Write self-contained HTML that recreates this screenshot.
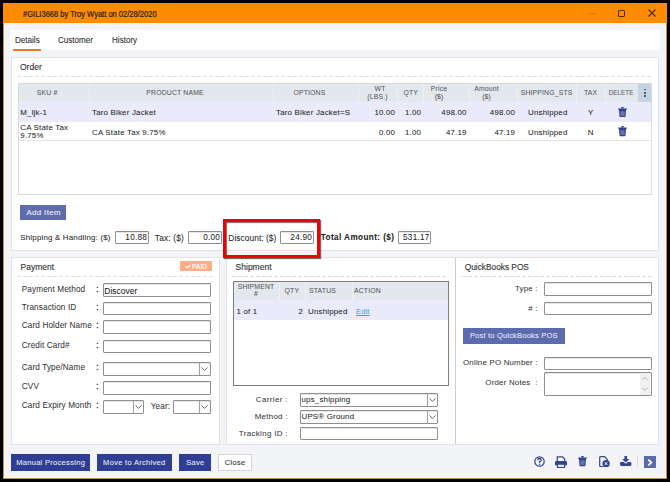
<!DOCTYPE html>
<html><head><meta charset="utf-8">
<style>
*{box-sizing:border-box;margin:0;padding:0}
html,body{width:670px;height:482px;overflow:hidden;background:#000}
body{position:relative;font-family:"Liberation Sans",sans-serif;color:#222}
.a{position:absolute}
.t{position:absolute;white-space:nowrap;line-height:12px}
</style></head><body>
<div class="a" style="left:3px;top:3px;width:664px;height:476px;background:#b89058"></div>
<div class="a" style="left:4px;top:3px;width:662px;height:475px;background:#fff6dc"></div>
<div class="a" style="left:5px;top:3px;width:660px;height:474px;background:#f3f4f7"></div>
<div class="a" style="left:3px;top:3px;width:664px;height:20px;background:#ff8c00"></div>
<div class="t" style="top:7.70px;font-size:8.4px;color:#2a1a0a;-webkit-text-stroke:0.12px #2a1a0a;left:23.00px;transform-origin:0 50%;transform:scaleX(0.9);-webkit-text-stroke:0.2px #2a1a0a;">#GILI3668 by Troy Wyatt on 02/28/2020</div>
<div class="a" style="left:14px;top:11px;width:1px;height:1px;background:#c8741a;opacity:.6"></div>
<div class="a" style="left:17px;top:11px;width:1px;height:1px;background:#c8741a;opacity:.6"></div>
<div class="a" style="left:15px;top:13px;width:1px;height:1px;background:#c8741a;opacity:.6"></div>
<div class="a" style="left:13px;top:14px;width:1px;height:1px;background:#c8741a;opacity:.6"></div>
<div class="a" style="left:589px;top:13px;width:7px;height:1px;background:#d07a20"></div>
<div class="a" style="left:618px;top:9.6px;width:7px;height:7.000000000000002px;border:1.2px solid #4a2a10;border-radius:1px"></div>
<svg class="a" style="left:647.5px;top:9px" width="8" height="8" viewBox="0 0 8 8"><path d="M0.5 0.5 L7.5 7.5 M7.5 0.5 L0.5 7.5" stroke="#4a2a10" stroke-width="1.1"/></svg>
<div class="a" style="left:10px;top:30px;width:650px;height:20px;background:#fff"></div>
<div class="t" style="top:34.00px;font-size:8.6px;color:#333;-webkit-text-stroke:0.12px #333;left:14.50px;transform-origin:0 50%;transform:scaleX(0.94);">Details</div>
<div class="t" style="top:34.00px;font-size:8.6px;color:#333;-webkit-text-stroke:0.12px #333;left:58.00px;transform-origin:0 50%;transform:scaleX(0.94);">Customer</div>
<div class="t" style="top:34.00px;font-size:8.6px;color:#333;-webkit-text-stroke:0.12px #333;left:112.00px;transform-origin:0 50%;transform:scaleX(0.94);">History</div>
<div class="a" style="left:13px;top:49px;width:28px;height:2px;background:#ee7a22"></div>
<div class="a" style="left:11px;top:57px;width:648px;height:194px;background:#fff;border:1px solid #e1e3e8"></div>
<div class="t" style="top:61.30px;font-size:8.5px;color:#333;-webkit-text-stroke:0.12px #333;left:20.00px;">Order</div>
<div class="a" style="left:17px;top:76px;width:636px;height:1px;background-image:linear-gradient(to right,#dcdee2 0,#dcdee2 4px,transparent 4px);background-size:6px 1px"></div>
<div class="a" style="left:18px;top:83px;width:634px;height:112px;background:#fff;border:1px solid #d6dae1"></div>
<div class="a" style="left:19px;top:84px;width:632px;height:18px;background:#e3e8ef"></div>
<div class="a" style="left:638px;top:84px;width:13px;height:18px;background:#c5d3e2"></div>
<div class="a" style="left:644.2px;top:88.7px;width:1.599999999999909px;height:1.5999999999999943px;background:#555d68"></div>
<div class="a" style="left:644.2px;top:92.0px;width:1.599999999999909px;height:1.5999999999999943px;background:#555d68"></div>
<div class="a" style="left:644.2px;top:95.3px;width:1.599999999999909px;height:1.5999999999999943px;background:#555d68"></div>
<div class="a" style="left:89px;top:84px;width:1px;height:18px;background:#eef0f4"></div>
<div class="a" style="left:273px;top:84px;width:1px;height:18px;background:#eef0f4"></div>
<div class="a" style="left:358px;top:84px;width:1px;height:18px;background:#eef0f4"></div>
<div class="a" style="left:397px;top:84px;width:1px;height:18px;background:#eef0f4"></div>
<div class="a" style="left:423px;top:84px;width:1px;height:18px;background:#eef0f4"></div>
<div class="a" style="left:469px;top:84px;width:1px;height:18px;background:#eef0f4"></div>
<div class="a" style="left:517px;top:84px;width:1px;height:18px;background:#eef0f4"></div>
<div class="a" style="left:576px;top:84px;width:1px;height:18px;background:#eef0f4"></div>
<div class="a" style="left:605px;top:84px;width:1px;height:18px;background:#eef0f4"></div>
<div class="a" style="left:19px;top:102px;width:632px;height:19px;background:#e9ebfa"></div>
<div class="a" style="left:19px;top:140px;width:632px;height:1px;background:#e2e4e8"></div>
<div class="a" style="left:19px;top:121px;width:632px;height:1px;background:#eceef2"></div>
<div class="t" style="top:87.40px;font-size:6.85px;color:#555;letter-spacing:0.17px;-webkit-text-stroke:0.04px #555;left:-53.00px;width:200px;text-align:center;text-indent:0.17px;">SKU #</div>
<div class="t" style="top:87.40px;font-size:6.85px;color:#555;letter-spacing:0.17px;-webkit-text-stroke:0.04px #555;left:75.00px;width:200px;text-align:center;text-indent:0.17px;">PRODUCT NAME</div>
<div class="t" style="top:87.40px;font-size:6.85px;color:#555;letter-spacing:0.17px;-webkit-text-stroke:0.04px #555;left:209.40px;width:200px;text-align:center;text-indent:0.17px;">OPTIONS</div>
<div class="t" style="top:83.40px;font-size:6.85px;color:#555;letter-spacing:0.17px;-webkit-text-stroke:0.04px #555;left:280.00px;width:200px;text-align:center;text-indent:0.17px;">WT</div>
<div class="t" style="top:91.40px;font-size:6.85px;color:#555;letter-spacing:0.17px;-webkit-text-stroke:0.04px #555;left:277.50px;width:200px;text-align:center;text-indent:0.17px;">(LBS.)</div>
<div class="t" style="top:87.40px;font-size:6.85px;color:#555;letter-spacing:0.17px;-webkit-text-stroke:0.04px #555;left:310.70px;width:200px;text-align:center;text-indent:0.17px;">QTY</div>
<div class="t" style="top:83.40px;font-size:6.85px;color:#555;letter-spacing:0.17px;-webkit-text-stroke:0.04px #555;left:339.00px;width:200px;text-align:center;text-indent:0.17px;">Price</div>
<div class="t" style="top:91.40px;font-size:6.85px;color:#555;letter-spacing:0.17px;-webkit-text-stroke:0.04px #555;left:339.00px;width:200px;text-align:center;text-indent:0.17px;">($)</div>
<div class="t" style="top:83.40px;font-size:6.85px;color:#555;letter-spacing:0.17px;-webkit-text-stroke:0.04px #555;left:386.50px;width:200px;text-align:center;text-indent:0.17px;">Amount</div>
<div class="t" style="top:91.40px;font-size:6.85px;color:#555;letter-spacing:0.17px;-webkit-text-stroke:0.04px #555;left:386.50px;width:200px;text-align:center;text-indent:0.17px;">($)</div>
<div class="t" style="top:87.40px;font-size:6.85px;color:#555;letter-spacing:0.17px;-webkit-text-stroke:0.04px #555;left:446.50px;width:200px;text-align:center;text-indent:0.17px;">SHIPPING_STS</div>
<div class="t" style="top:87.40px;font-size:6.85px;color:#555;letter-spacing:0.17px;-webkit-text-stroke:0.04px #555;left:490.50px;width:200px;text-align:center;text-indent:0.17px;">TAX</div>
<div class="t" style="top:87.40px;font-size:6.85px;color:#555;letter-spacing:0.17px;-webkit-text-stroke:0.04px #555;left:521.40px;width:200px;text-align:center;transform-origin:50% 50%;transform:scaleX(0.9);text-indent:0.17px;">DELETE</div>
<div class="t" style="top:106.90px;font-size:7.9px;color:#222;letter-spacing:0.20px;-webkit-text-stroke:0.04px #222;left:20.30px;">M_ljk-1</div>
<div class="t" style="top:106.90px;font-size:7.9px;color:#222;letter-spacing:0.20px;-webkit-text-stroke:0.04px #222;left:92.00px;">Taro Biker Jacket</div>
<div class="t" style="top:106.90px;font-size:7.9px;color:#222;letter-spacing:0.20px;-webkit-text-stroke:0.04px #222;left:276.00px;">Taro Biker Jacket=S</div>
<div class="t" style="top:106.90px;font-size:7.9px;color:#222;letter-spacing:0.20px;-webkit-text-stroke:0.04px #222;right:275.00px;margin-right:-0.20px;">10.00</div>
<div class="t" style="top:106.90px;font-size:7.9px;color:#222;letter-spacing:0.20px;-webkit-text-stroke:0.04px #222;left:405.00px;">1.00</div>
<div class="t" style="top:106.90px;font-size:7.9px;color:#222;letter-spacing:0.20px;-webkit-text-stroke:0.04px #222;right:203.50px;margin-right:-0.20px;">498.00</div>
<div class="t" style="top:106.90px;font-size:7.9px;color:#222;letter-spacing:0.20px;-webkit-text-stroke:0.04px #222;right:155.00px;margin-right:-0.20px;">498.00</div>
<div class="t" style="top:106.90px;font-size:7.9px;color:#222;letter-spacing:0.20px;-webkit-text-stroke:0.04px #222;left:528.00px;">Unshipped</div>
<div class="t" style="top:106.90px;font-size:7.9px;color:#222;letter-spacing:0.20px;-webkit-text-stroke:0.04px #222;left:490.60px;width:200px;text-align:center;text-indent:0.20px;">Y</div>
<svg class="a" style="left:618px;top:106.5px" width="9" height="10.5" viewBox="0 0 9 10.5"><rect x="3.2" y="0" width="2.6" height="1.5" rx="0.5" fill="#33428f"/><path d="M0 1.6 H9 L8.4 3.1 H0.6 Z" fill="#33428f"/><path d="M1 3.1 H8 L7.5 9.6 Q7.4 10.3 6.7 10.3 H2.3 Q1.6 10.3 1.5 9.6 Z" fill="#33428f"/><rect x="2.4" y="4.2" width="4.2" height="4.8" fill="#6872ad"/></svg>
<div class="t" style="top:121.90px;font-size:7.9px;color:#222;letter-spacing:0.20px;-webkit-text-stroke:0.04px #222;left:20.30px;">CA State Tax</div>
<div class="t" style="top:130.40px;font-size:7.9px;color:#222;letter-spacing:0.20px;-webkit-text-stroke:0.04px #222;left:20.30px;">9.75%</div>
<div class="t" style="top:126.70px;font-size:7.9px;color:#222;letter-spacing:0.20px;-webkit-text-stroke:0.04px #222;left:92.00px;">CA State Tax 9.75%</div>
<div class="t" style="top:126.70px;font-size:7.9px;color:#222;letter-spacing:0.20px;-webkit-text-stroke:0.04px #222;right:275.00px;margin-right:-0.20px;">0.00</div>
<div class="t" style="top:126.70px;font-size:7.9px;color:#222;letter-spacing:0.20px;-webkit-text-stroke:0.04px #222;left:405.00px;">1.00</div>
<div class="t" style="top:126.70px;font-size:7.9px;color:#222;letter-spacing:0.20px;-webkit-text-stroke:0.04px #222;right:203.50px;margin-right:-0.20px;">47.19</div>
<div class="t" style="top:126.70px;font-size:7.9px;color:#222;letter-spacing:0.20px;-webkit-text-stroke:0.04px #222;right:155.00px;margin-right:-0.20px;">47.19</div>
<div class="t" style="top:126.70px;font-size:7.9px;color:#222;letter-spacing:0.20px;-webkit-text-stroke:0.04px #222;left:528.00px;">Unshipped</div>
<div class="t" style="top:126.70px;font-size:7.9px;color:#222;letter-spacing:0.20px;-webkit-text-stroke:0.04px #222;left:490.60px;width:200px;text-align:center;text-indent:0.20px;">N</div>
<svg class="a" style="left:618px;top:126px" width="9" height="10.5" viewBox="0 0 9 10.5"><rect x="3.2" y="0" width="2.6" height="1.5" rx="0.5" fill="#33428f"/><path d="M0 1.6 H9 L8.4 3.1 H0.6 Z" fill="#33428f"/><path d="M1 3.1 H8 L7.5 9.6 Q7.4 10.3 6.7 10.3 H2.3 Q1.6 10.3 1.5 9.6 Z" fill="#33428f"/><rect x="2.4" y="4.2" width="4.2" height="4.8" fill="#6872ad"/></svg>
<div class="a" style="left:20px;top:205px;width:46px;height:15px;background:#5e6cae"></div>
<div class="t" style="top:207.00px;font-size:7.9px;color:#eef0fa;letter-spacing:0.35px;-webkit-text-stroke:0.1px #eef0fa;left:-56.50px;width:200px;text-align:center;text-indent:0.35px;">Add Item</div>
<div class="t" style="top:232.00px;font-size:7.9px;color:#222;letter-spacing:0.20px;-webkit-text-stroke:0.04px #222;left:20.30px;">Shipping &amp; Handling: ($)</div>
<div class="a" style="left:114.5px;top:230.5px;width:34.0px;height:13.0px;background:#fff;border:1px solid #8f8f8f;border-radius:1px;box-shadow:inset 0 1px 0 #e6e6e6"></div>
<div class="t" style="top:232.00px;font-size:8.19px;color:#222;letter-spacing:0.25px;-webkit-text-stroke:0.04px #222;right:523.20px;margin-right:-0.25px;">10.88</div>
<div class="t" style="top:232.00px;font-size:8.38px;color:#222;letter-spacing:0.15px;-webkit-text-stroke:0.04px #222;left:154.80px;">Tax: ($)</div>
<div class="a" style="left:187.5px;top:230.5px;width:34.0px;height:13.0px;background:#fff;border:1px solid #8f8f8f;border-radius:1px;box-shadow:inset 0 1px 0 #e6e6e6"></div>
<div class="t" style="top:232.00px;font-size:8.19px;color:#222;letter-spacing:0.25px;-webkit-text-stroke:0.04px #222;right:450.20px;margin-right:-0.25px;">0.00</div>
<div class="t" style="top:232.00px;font-size:8.38px;color:#222;letter-spacing:0.05px;-webkit-text-stroke:0.04px #222;left:228.30px;">Discount: ($)</div>
<div class="a" style="left:279.5px;top:230.5px;width:34.0px;height:13.0px;background:#fff;border:1px solid #8f8f8f;border-radius:1px;box-shadow:inset 0 1px 0 #e6e6e6"></div>
<div class="t" style="top:232.00px;font-size:8.19px;color:#222;letter-spacing:0.25px;-webkit-text-stroke:0.04px #222;right:358.20px;margin-right:-0.25px;">24.90</div>
<div class="t" style="top:232.00px;font-size:8.19px;color:#222;letter-spacing:0.40px;-webkit-text-stroke:0.05px #222;font-weight:bold;left:320.80px;">Total Amount: ($)</div>
<div class="a" style="left:397.5px;top:230.5px;width:33.5px;height:13.0px;background:#fff;border:1px solid #8f8f8f;border-radius:1px;box-shadow:inset 0 1px 0 #e6e6e6"></div>
<div class="t" style="top:232.00px;font-size:8.19px;color:#222;letter-spacing:0.25px;-webkit-text-stroke:0.04px #222;right:240.70px;margin-right:-0.25px;">531.17</div>
<div class="a" style="left:11px;top:257px;width:209px;height:188px;background:#fff;border:1px solid #e1e3e8"></div>
<div class="t" style="top:261.40px;font-size:8.5px;color:#333;-webkit-text-stroke:0.12px #333;left:20.60px;">Payment</div>
<div class="a" style="left:179.5px;top:261.3px;width:32.0px;height:10.0px;background:#fdae86"></div>
<svg class="a" style="left:184.5px;top:263.5px" width="6" height="5" viewBox="0 0 6 5"><path d="M0.6 2.5 L2.2 4 L5.4 0.8" fill="none" stroke="#fff" stroke-width="1.2"/></svg>
<div class="t" style="top:260.90px;font-size:6.47px;color:#fff;letter-spacing:0.16px;-webkit-text-stroke:0.15px #fff;left:99.50px;width:200px;text-align:center;text-indent:0.16px;">PAID</div>
<div class="a" style="left:17px;top:276px;width:196px;height:1px;background-image:linear-gradient(to right,#dcdee2 0,#dcdee2 4px,transparent 4px);background-size:6px 1px"></div>
<div class="t" style="top:283.60px;font-size:8.19px;color:#333;letter-spacing:0.12px;-webkit-text-stroke:0.04px #333;left:21.80px;">Payment Method</div>
<div class="t" style="top:283.60px;font-size:8.19px;color:#333;letter-spacing:0.21px;-webkit-text-stroke:0.3px #333;left:96.30px;">:</div>
<div class="t" style="top:302.10px;font-size:8.19px;color:#333;letter-spacing:0.12px;-webkit-text-stroke:0.04px #333;left:21.80px;">Transaction ID</div>
<div class="t" style="top:302.10px;font-size:8.19px;color:#333;letter-spacing:0.21px;-webkit-text-stroke:0.3px #333;left:96.30px;">:</div>
<div class="t" style="top:320.35px;font-size:8.19px;color:#333;letter-spacing:0.12px;-webkit-text-stroke:0.04px #333;left:21.80px;">Card Holder Name</div>
<div class="t" style="top:320.35px;font-size:8.19px;color:#333;letter-spacing:0.21px;-webkit-text-stroke:0.3px #333;left:96.30px;">:</div>
<div class="t" style="top:340.10px;font-size:8.19px;color:#333;letter-spacing:0.12px;-webkit-text-stroke:0.04px #333;left:21.80px;">Credit Card#</div>
<div class="t" style="top:340.10px;font-size:8.19px;color:#333;letter-spacing:0.21px;-webkit-text-stroke:0.3px #333;left:96.30px;">:</div>
<div class="t" style="top:362.10px;font-size:8.19px;color:#333;letter-spacing:0.12px;-webkit-text-stroke:0.04px #333;left:21.80px;">Card Type/Name</div>
<div class="t" style="top:362.10px;font-size:8.19px;color:#333;letter-spacing:0.21px;-webkit-text-stroke:0.3px #333;left:96.30px;">:</div>
<div class="t" style="top:381.35px;font-size:8.19px;color:#333;letter-spacing:0.12px;-webkit-text-stroke:0.04px #333;left:21.80px;">CVV</div>
<div class="t" style="top:381.35px;font-size:8.19px;color:#333;letter-spacing:0.21px;-webkit-text-stroke:0.3px #333;left:96.30px;">:</div>
<div class="t" style="top:400.10px;font-size:8.19px;color:#333;letter-spacing:0.12px;-webkit-text-stroke:0.04px #333;left:21.80px;">Card Expiry Month</div>
<div class="t" style="top:400.10px;font-size:8.19px;color:#333;letter-spacing:0.21px;-webkit-text-stroke:0.3px #333;left:96.30px;">:</div>
<div class="a" style="left:102.5px;top:283px;width:108.0px;height:14px;background:#fff;border:1px solid #8f8f8f;border-radius:1px;box-shadow:inset 0 1px 0 #e6e6e6"></div>
<div class="t" style="top:284.60px;font-size:8.47px;color:#222;letter-spacing:0.02px;-webkit-text-stroke:0.04px #222;left:104.30px;">Discover</div>
<div class="a" style="left:102.5px;top:302px;width:108.0px;height:13px;background:#fff;border:1px solid #8f8f8f;border-radius:1px;box-shadow:inset 0 1px 0 #e6e6e6"></div>
<div class="a" style="left:102.5px;top:320px;width:108.0px;height:13.5px;background:#fff;border:1px solid #8f8f8f;border-radius:1px;box-shadow:inset 0 1px 0 #e6e6e6"></div>
<div class="a" style="left:102.5px;top:340px;width:108.0px;height:13px;background:#fff;border:1px solid #8f8f8f;border-radius:1px;box-shadow:inset 0 1px 0 #e6e6e6"></div>
<div class="a" style="left:102.5px;top:361.5px;width:108.0px;height:14.0px;background:#fff;border:1px solid #8f8f8f;border-radius:1px;box-shadow:inset 0 1px 0 #e6e6e6"></div>
<div class="a" style="left:199px;top:362.5px;width:1px;height:12.0px;background:#a0a0a0"></div>
<svg class="a" style="left:201.2px;top:366.5px" width="7" height="4" viewBox="0 0 7 4"><path d="M0.5 0.5 L3.5 3.3 L6.5 0.5" fill="none" stroke="#555" stroke-width="0.9"/></svg>
<div class="a" style="left:102.5px;top:381px;width:108.0px;height:13.5px;background:#fff;border:1px solid #8f8f8f;border-radius:1px;box-shadow:inset 0 1px 0 #e6e6e6"></div>
<div class="a" style="left:102.5px;top:399.5px;width:41.5px;height:14.0px;background:#fff;border:1px solid #8f8f8f;border-radius:1px;box-shadow:inset 0 1px 0 #e6e6e6"></div>
<div class="a" style="left:133px;top:400.5px;width:1px;height:12.0px;background:#a0a0a0"></div>
<svg class="a" style="left:135.0px;top:404.5px" width="7" height="4" viewBox="0 0 7 4"><path d="M0.5 0.5 L3.5 3.3 L6.5 0.5" fill="none" stroke="#555" stroke-width="0.9"/></svg>
<div class="t" style="top:401.10px;font-size:8.19px;color:#333;letter-spacing:0.12px;-webkit-text-stroke:0.04px #333;left:150.80px;">Year:</div>
<div class="a" style="left:173px;top:399.5px;width:37.5px;height:14.0px;background:#fff;border:1px solid #8f8f8f;border-radius:1px;box-shadow:inset 0 1px 0 #e6e6e6"></div>
<div class="a" style="left:199px;top:400.5px;width:1px;height:12.0px;background:#a0a0a0"></div>
<svg class="a" style="left:201.2px;top:404.5px" width="7" height="4" viewBox="0 0 7 4"><path d="M0.5 0.5 L3.5 3.3 L6.5 0.5" fill="none" stroke="#555" stroke-width="0.9"/></svg>
<div class="a" style="left:226px;top:257px;width:230px;height:188px;background:#fff;border:1px solid #e1e3e8"></div>
<div class="t" style="top:261.40px;font-size:8.5px;color:#333;-webkit-text-stroke:0.12px #333;left:235.60px;">Shipment</div>
<div class="a" style="left:232px;top:276px;width:216px;height:1px;background-image:linear-gradient(to right,#dcdee2 0,#dcdee2 4px,transparent 4px);background-size:6px 1px"></div>
<div class="a" style="left:233px;top:281px;width:216px;height:105px;background:#fff;border:1px solid #7d7d7d"></div>
<div class="a" style="left:234px;top:282px;width:214px;height:18px;background:#e3e8ef"></div>
<div class="a" style="left:278.5px;top:282px;width:1.0px;height:18px;background:#eef0f4"></div>
<div class="a" style="left:305px;top:282px;width:1px;height:18px;background:#eef0f4"></div>
<div class="a" style="left:352px;top:282px;width:1px;height:18px;background:#eef0f4"></div>
<div class="a" style="left:234px;top:300px;width:214px;height:20px;background:#e9ebfa"></div>
<div class="t" style="top:281.40px;font-size:6.85px;color:#555;letter-spacing:0.17px;-webkit-text-stroke:0.04px #555;left:156.00px;width:200px;text-align:center;text-indent:0.17px;">SHIPMENT</div>
<div class="t" style="top:288.40px;font-size:6.85px;color:#555;letter-spacing:0.17px;-webkit-text-stroke:0.04px #555;left:156.00px;width:200px;text-align:center;text-indent:0.17px;">#</div>
<div class="t" style="top:285.20px;font-size:6.85px;color:#555;letter-spacing:0.17px;-webkit-text-stroke:0.04px #555;left:191.80px;width:200px;text-align:center;text-indent:0.17px;">QTY</div>
<div class="t" style="top:285.10px;font-size:6.85px;color:#555;letter-spacing:0.17px;-webkit-text-stroke:0.04px #555;left:309.00px;">STATUS</div>
<div class="t" style="top:285.10px;font-size:6.85px;color:#555;letter-spacing:0.17px;-webkit-text-stroke:0.04px #555;left:354.00px;">ACTION</div>
<div class="t" style="top:305.70px;font-size:7.9px;color:#222;letter-spacing:0.20px;-webkit-text-stroke:0.04px #222;left:236.50px;">1 of 1</div>
<div class="t" style="top:305.70px;font-size:7.9px;color:#222;letter-spacing:0.20px;-webkit-text-stroke:0.04px #222;right:367.00px;margin-right:-0.20px;">2</div>
<div class="t" style="top:305.70px;font-size:7.9px;color:#222;letter-spacing:0.20px;-webkit-text-stroke:0.04px #222;left:308.00px;">Unshipped</div>
<div class="t" style="top:305.90px;font-size:7.43px;color:#3aa0d8;letter-spacing:0.19px;-webkit-text-stroke:0.04px #3aa0d8;left:356.00px;text-decoration:underline;">Edit</div>
<div class="t" style="top:394.00px;font-size:7.9px;color:#333;letter-spacing:0.40px;-webkit-text-stroke:0.04px #333;right:382.50px;margin-right:-0.40px;">Carrier :</div>
<div class="a" style="left:299.5px;top:392.5px;width:138.5px;height:14.0px;background:#fff;border:1px solid #8f8f8f;border-radius:1px;box-shadow:inset 0 1px 0 #e6e6e6"></div>
<div class="a" style="left:427px;top:393.5px;width:1px;height:12.0px;background:#a0a0a0"></div>
<svg class="a" style="left:429.0px;top:397.5px" width="7" height="4" viewBox="0 0 7 4"><path d="M0.5 0.5 L3.5 3.3 L6.5 0.5" fill="none" stroke="#555" stroke-width="0.9"/></svg>
<div class="t" style="top:394.00px;font-size:7.9px;color:#222;letter-spacing:0.20px;-webkit-text-stroke:0.04px #222;left:301.50px;">ups_shipping</div>
<div class="t" style="top:411.20px;font-size:7.9px;color:#333;letter-spacing:0.30px;-webkit-text-stroke:0.04px #333;right:382.50px;margin-right:-0.30px;">Method :</div>
<div class="a" style="left:299.5px;top:409.5px;width:138.5px;height:14.5px;background:#fff;border:1px solid #8f8f8f;border-radius:1px;box-shadow:inset 0 1px 0 #e6e6e6"></div>
<div class="a" style="left:427px;top:410.5px;width:1px;height:12.5px;background:#a0a0a0"></div>
<svg class="a" style="left:429.0px;top:414.8px" width="7" height="4" viewBox="0 0 7 4"><path d="M0.5 0.5 L3.5 3.3 L6.5 0.5" fill="none" stroke="#555" stroke-width="0.9"/></svg>
<div class="t" style="top:411.20px;font-size:7.9px;color:#222;letter-spacing:0.20px;-webkit-text-stroke:0.04px #222;left:301.50px;">UPS&reg; Ground</div>
<div class="t" style="top:427.90px;font-size:7.9px;color:#333;letter-spacing:0.35px;-webkit-text-stroke:0.04px #333;right:382.50px;margin-right:-0.35px;">Tracking ID :</div>
<div class="a" style="left:299.5px;top:426.5px;width:138.5px;height:13.5px;background:#fff;border:1px solid #8f8f8f;border-radius:1px;box-shadow:inset 0 1px 0 #e6e6e6"></div>
<div class="a" style="left:455px;top:257px;width:204px;height:188px;background:#fff;border:1px solid #e1e3e8"></div>
<div class="a" style="left:455px;top:258px;width:1px;height:186px;background:#cbcdd2"></div>
<div class="t" style="top:261.00px;font-size:8.3px;color:#333;-webkit-text-stroke:0.12px #333;left:464.80px;">QuickBooks POS</div>
<div class="a" style="left:462px;top:276px;width:191px;height:1px;background-image:linear-gradient(to right,#dcdee2 0,#dcdee2 4px,transparent 4px);background-size:6px 1px"></div>
<div class="t" style="top:282.90px;font-size:7.9px;color:#333;letter-spacing:0.20px;-webkit-text-stroke:0.04px #333;right:132.50px;margin-right:-0.20px;">Type :</div>
<div class="a" style="left:544px;top:281.5px;width:108px;height:14.0px;background:#fff;border:1px solid #8f8f8f;border-radius:1px;box-shadow:inset 0 1px 0 #e6e6e6"></div>
<div class="t" style="top:302.70px;font-size:7.9px;color:#333;letter-spacing:0.20px;-webkit-text-stroke:0.04px #333;right:132.50px;margin-right:-0.20px;"># :</div>
<div class="a" style="left:544px;top:301.5px;width:108px;height:13.5px;background:#fff;border:1px solid #8f8f8f;border-radius:1px;box-shadow:inset 0 1px 0 #e6e6e6"></div>
<div class="a" style="left:462.5px;top:328px;width:102.5px;height:15.5px;background:#5c6bad"></div>
<div class="t" style="top:330.10px;font-size:7.52px;color:#eef0fa;letter-spacing:0.19px;-webkit-text-stroke:0.04px #eef0fa;left:413.70px;width:200px;text-align:center;text-indent:0.19px;">Post to QuickBooks POS</div>
<div class="t" style="top:357.40px;font-size:7.9px;color:#333;letter-spacing:0.20px;-webkit-text-stroke:0.04px #333;right:132.50px;margin-right:-0.20px;">Online PO Number :</div>
<div class="a" style="left:544px;top:356.5px;width:108px;height:13.0px;background:#fff;border:1px solid #8f8f8f;border-radius:1px;box-shadow:inset 0 1px 0 #e6e6e6"></div>
<div class="t" style="top:377.10px;font-size:7.9px;color:#333;letter-spacing:0.20px;-webkit-text-stroke:0.04px #333;right:132.50px;margin-right:-0.20px;">Order Notes&nbsp;&nbsp;:</div>
<div class="a" style="left:544px;top:372px;width:108px;height:23.5px;background:#fff;border:1px solid #8f8f8f;border-radius:1px;box-shadow:inset 0 1px 0 #e6e6e6"></div>
<div class="a" style="left:640px;top:373px;width:10px;height:21.5px;background:#f0f0f0"></div>
<svg class="a" style="left:642px;top:376px" width="6" height="16" viewBox="0 0 6 16"><path d="M0.6 3.8 L3 1.4 L5.4 3.8 M0.6 12 L3 14.4 L5.4 12" fill="none" stroke="#a6a6a6" stroke-width="0.9"/></svg>
<div class="a" style="left:11px;top:454px;width:79px;height:17px;background:#2f3d94"></div>
<div class="t" style="top:456.90px;font-size:7.52px;color:#e6e8f2;letter-spacing:0.30px;-webkit-text-stroke:0.08px #e6e8f2;left:-49.50px;width:200px;text-align:center;text-indent:0.30px;">Manual Processing</div>
<div class="a" style="left:97px;top:454px;width:75px;height:17px;background:#2f3d94"></div>
<div class="t" style="top:456.90px;font-size:7.52px;color:#e6e8f2;letter-spacing:0.30px;-webkit-text-stroke:0.08px #e6e8f2;left:34.20px;width:200px;text-align:center;text-indent:0.30px;">Move to Archived</div>
<div class="a" style="left:179px;top:454px;width:32px;height:17px;background:#2f3d94"></div>
<div class="t" style="top:456.90px;font-size:7.52px;color:#e6e8f2;letter-spacing:0.30px;-webkit-text-stroke:0.08px #e6e8f2;left:95.20px;width:200px;text-align:center;text-indent:0.30px;">Save</div>
<div class="a" style="left:218px;top:454px;width:34px;height:17px;background:#fff;border:1px solid #d6d6d6"></div>
<div class="t" style="top:456.90px;font-size:7.52px;color:#333;letter-spacing:0.30px;-webkit-text-stroke:0.08px #333;left:135.00px;width:200px;text-align:center;text-indent:0.30px;">Close</div>
<svg class="a" style="left:534px;top:456px" width="11" height="11" viewBox="0 0 11 11"><circle cx="5.5" cy="5.5" r="4.7" fill="none" stroke="#34448f" stroke-width="1.2"/><path d="M3.8 4.3 Q3.8 2.5 5.5 2.5 Q7.2 2.5 7.2 4 Q7.2 5 5.7 5.7 L5.7 6.7" fill="none" stroke="#34448f" stroke-width="1.3"/><circle cx="5.7" cy="8.3" r="0.75" fill="#34448f"/></svg>
<svg class="a" style="left:555px;top:456px" width="12" height="12" viewBox="0 0 12 12"><path d="M2.3 5 V0.8 H7.6 L9.6 2.8 V5" fill="#f3f4f7" stroke="#34448f" stroke-width="1.2"/><rect x="0" y="5" width="12" height="4.5" rx="1.2" fill="#34448f"/><rect x="2.4" y="8.2" width="7.2" height="3.2" fill="#f3f4f7" stroke="#34448f" stroke-width="1.1"/></svg>
<svg class="a" style="left:578.2px;top:456.3px" width="9" height="10.5" viewBox="0 0 9 10.5"><rect x="3.2" y="0" width="2.6" height="1.5" rx="0.5" fill="#34448f"/><path d="M0 1.6 H9 L8.4 3.1 H0.6 Z" fill="#34448f"/><path d="M1 3.1 H8 L7.5 9.6 Q7.4 10.3 6.7 10.3 H2.3 Q1.6 10.3 1.5 9.6 Z" fill="#34448f"/><rect x="2.4" y="4.2" width="4.2" height="4.8" fill="#6872ad"/></svg>
<svg class="a" style="left:598.8px;top:455.8px" width="11" height="11.5" viewBox="0 0 11 11.5"><path d="M4.5 10.6 H1.6 Q0.7 10.6 0.7 9.7 V1.6 Q0.7 0.7 1.6 0.7 H5.6 L8.3 3.4 V5" fill="none" stroke="#34448f" stroke-width="1.2"/><circle cx="7.1" cy="7.6" r="3.7" fill="#34448f"/><path d="M5.9 6.3 L8.3 8.9 M8.3 6.3 L5.9 8.9" stroke="#fff" stroke-width="1"/></svg>
<svg class="a" style="left:620px;top:456px" width="11.5" height="10" viewBox="0 0 11.5 10"><path d="M4.4 0 H7.1 V3 H9.4 L5.75 6.4 L2.1 3 H4.4 Z" fill="#34448f"/><path d="M0 7.4 Q0 6 1.4 6 H3.6 L5.75 7.8 L7.9 6 H10.1 Q11.5 6 11.5 7.4 V8.6 Q11.5 9.9 10.1 9.9 H1.4 Q0 9.9 0 8.6 Z" fill="#34448f"/></svg>
<div class="a" style="left:637px;top:455px;width:1px;height:12px;background:#d8dbe2"></div>
<div class="a" style="left:643.5px;top:455.7px;width:12.5px;height:12.300000000000011px;background:#5c6bad"></div>
<svg class="a" style="left:647px;top:458.5px" width="6" height="7" viewBox="0 0 6 7"><path d="M1.2 0.7 L4.4 3.5 L1.2 6.3" fill="none" stroke="#fff" stroke-width="1.7"/></svg>
<div class="a" style="left:222.8px;top:219.3px;width:97.5px;height:38.69999999999999px;border:3px solid #f00000;box-shadow:1px 1px 1px rgba(40,0,0,.6), inset 1px 1px 1px rgba(40,0,0,.6)"></div>
</body></html>
